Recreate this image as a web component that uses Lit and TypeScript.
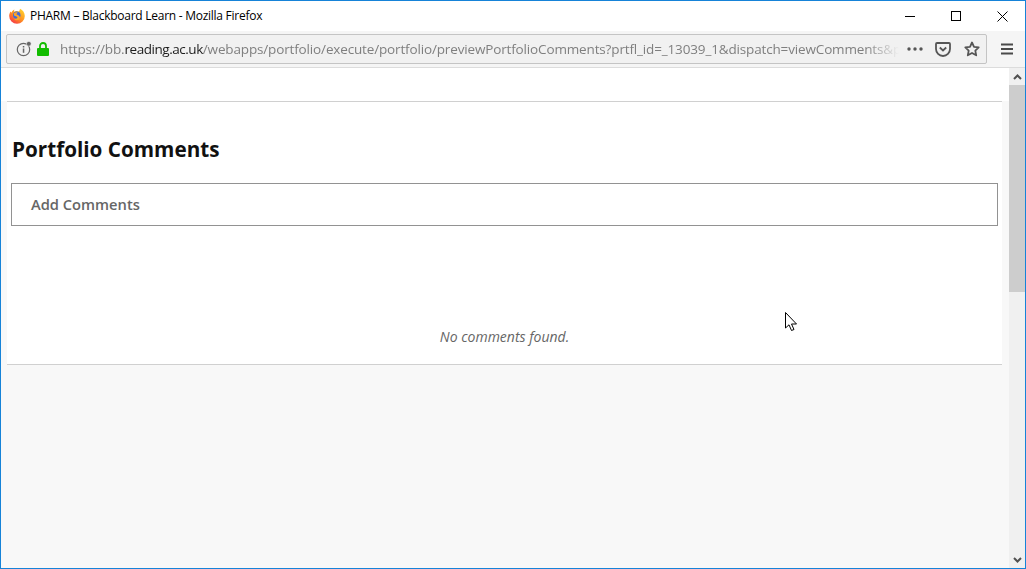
import { LitElement, html, css } from "lit";
import { customElement } from "lit/decorators.js";

@customElement("app-root")
export class AppRoot extends LitElement {
  static styles = css`
    :host { display: block; width: 1026px; height: 569px; box-sizing: border-box; border: 1px solid #1683d8; background: #fff; position: relative; overflow: hidden; font-family: "Open Sans", sans-serif; }
    .win { display: flex; flex-direction: column; height: 100%; }
    .titlebar { height: 30px; flex: none; display: flex; align-items: center; background: #fff; }
    .favicon { width: 16px; height: 16px; margin-left: 8px; flex: none; }
    .title { margin-left: 5px; font: 12px/16px "Segoe UI", "Open Sans", sans-serif; color: #000; flex: 1; letter-spacing: -0.26px; }
    .wbtn { width: 46px; height: 30px; display: flex; align-items: center; justify-content: center; flex: none; }
    .toolbar { height: 36px; flex: none; background: #f5f5f5; border-bottom: 1px solid #dcdcdc; display: flex; align-items: center; padding: 0 0 0 5px; }
    .urlbar { width: 981px; height: 30px; box-sizing: border-box; border: 1px solid #c4c4c4; border-radius: 2px; background: #f1f1f1; display: flex; align-items: center; flex: none; }
    .info { margin-left: 9px; flex: none; }
    .lock { margin-left: 5px; flex: none; }
    .url { margin-left: 11px; width: 839px; flex: none; white-space: nowrap; font: 13.5px/20px "Open Sans", sans-serif; color: #7f7f7f; letter-spacing: -0.15px;
      -webkit-mask-image: linear-gradient(to right, #000 96%, transparent 100%); mask-image: linear-gradient(to right, #000 96%, transparent 100%); }
    .url b { font-weight: 400; color: #1c1c1c; letter-spacing: -0.46px; }
    .dots { margin-left: 8px; flex: none; }
    .pocket { margin-left: 12px; flex: none; }
    .star { margin-left: 13px; flex: none; }
    .menu { margin-left: 13px; flex: none; }
    .body { flex: 1; display: flex; min-height: 0; background: #f8f8f8; }
    .page { flex: 1; display: flex; flex-direction: column; min-width: 0; }
    .band { height: 33px; flex: none; background: #fff; }
    .main { flex: none; height: 264px; box-sizing: border-box; margin: 0 7px 0 6px; background: #fff; border-top: 1px solid #d0d0d0; border-bottom: 1px solid #d0d0d0; display: flex; flex-direction: column; }
    h1 { margin: 32px 0 0 5px; font: 700 20.7px/30px "Open Sans", sans-serif; color: #111; }
    .add { margin: 19px 4px 0 4px; height: 43px; box-sizing: border-box; border: 1px solid #929292; display: flex; align-items: center; padding: 0 0 2px 19px; font: 600 14.7px/20px "Open Sans", sans-serif; color: #666; flex: none; }
    .empty { margin-top: 101px; text-align: center; font: italic 400 14px/20px "Open Sans", sans-serif; color: #666; }
    .sb { width: 16px; flex: none; background: #f0f0f0; display: flex; flex-direction: column; }
    .sb-btn { height: 17px; display: flex; align-items: center; justify-content: center; flex: none; }
    .thumb { height: 207px; background: #cdcdcd; flex: none; }
    .sb-track { flex: 1; }
    .cursor { position: absolute; left: 784px; top: 311px; }
  `;

  render() {
    return html`<div class="win">
      <div class="titlebar">
        <svg class="favicon" viewBox="0 0 16 16">
          <defs>
            <linearGradient id="fx" x1="0.85" y1="0.05" x2="0.15" y2="0.95">
              <stop offset="0" stop-color="#ffd02e"/>
              <stop offset="0.5" stop-color="#ff9320"/>
              <stop offset="1" stop-color="#f5324a"/>
            </linearGradient>
          </defs>
          <path d="M11 .8c2.800 1.200 4.800 4 4.800 7.200A7.800 7.800 0 0 1 .2 8C.2 6.300.7 4.700 1.600 3.400l.9 1.400C3 3.200 4.200 2 5.400 1.600 5 2.500 5 3.300 5.300 3.800 6.800 2.700 8.500 2.900 9.800 3.600 10.500 2.700 10.900 1.800 11 .8z" fill="url(#fx)"/>
          <circle cx="7.800" cy="7.200" r="3.700" fill="#3f6ad8"/>
          <path d="M5 5.300c1-.9 2.400-1.200 3.700-.8L7.400 6.200 9.200 7.200c1.200.7 2 1.700 1.700 3-.3 1.200-1.500 2-3 2-1.300 0-2.500-.7-3.100-1.800 1.300.6 3 .4 3.500-.6.300-.6-.2-1.200-.9-1.400L5 7.600z" fill="#ffa526"/>
        </svg>
        <div class="title">PHARM – Blackboard Learn - Mozilla Firefox</div>
        <div class="wbtn"><svg width="11" height="11" viewBox="0 0 11 11"><path d="M0 5.500H10" stroke="#000" stroke-width="1" fill="none"/></svg></div>
        <div class="wbtn"><svg width="11" height="11" viewBox="0 0 11 11"><rect x="0.500" y="0.500" width="9" height="9" stroke="#000" fill="none"/></svg></div>
        <div class="wbtn"><svg width="11" height="11" viewBox="0 0 11 11"><path d="M.5.500L10.500 10.500M10.500.500L.5 10.500" stroke="#000" stroke-width="1" fill="none"/></svg></div>
      </div>
      <div class="toolbar">
        <div class="urlbar">
          <svg class="info" width="16" height="16" viewBox="0 0 16 16">
            <circle cx="7.500" cy="8.500" r="6.200" fill="none" stroke="#666" stroke-width="1.200"/>
            <rect x="6.800" y="7.500" width="1.500" height="4.300" fill="#666"/><rect x="6.800" y="5" width="1.500" height="1.500" fill="#666"/>
            <circle cx="12.800" cy="2.800" r="2.400" fill="#666" stroke="#f1f1f1" stroke-width=".6"/>
          </svg>
          <svg class="lock" width="12" height="14" viewBox="0 0 12 14">
            <path d="M1 6h10a1 1 0 0 1 1 1v6a1 1 0 0 1-1 1H1a1 1 0 0 1-1-1V7a1 1 0 0 1 1-1z" fill="#12bc00"/>
            <path d="M3 6.500V4a3 3 0 0 1 6 0v2.500" fill="none" stroke="#12bc00" stroke-width="1.800"/>
          </svg>
          <div class="url">https://bb.<b>reading.ac.uk</b>/webapps/portfolio/execute/portfolio/previewPortfolioComments?prtfl_id=_13039_1&amp;dispatch=viewComments&amp;p</div>
          <svg class="dots" width="16" height="4" viewBox="0 0 16 4"><circle cx="2" cy="2" r="1.700" fill="#555"/><circle cx="8" cy="2" r="1.700" fill="#555"/><circle cx="14" cy="2" r="1.700" fill="#555"/></svg>
          <svg class="pocket" width="16" height="15" viewBox="0 0 16 15"><path d="M2 1h12a1 1 0 0 1 1 1v5a7 7 0 0 1-14 0V2a1 1 0 0 1 1-1z" fill="none" stroke="#555" stroke-width="1.800"/><path d="M4.800 5.500L8 8.500l3.200-3" fill="none" stroke="#555" stroke-width="1.800"/></svg>
          <svg class="star" width="16" height="16" viewBox="0 0 16 16"><path d="M8 1.500l2 4.300 4.700.6-3.400 3.200.9 4.700L8 12l-4.200 2.300.9-4.700L1.300 6.400 6 5.800z" fill="none" stroke="#555" stroke-width="1.800" stroke-linejoin="round"/></svg>
        </div>
        <svg class="menu" width="14" height="12" viewBox="0 0 14 12"><path d="M1 1.500H13M1 6H13M1 10.500H13" stroke="#4a4a4a" stroke-width="2"/></svg>
      </div>
      <div class="body">
        <div class="page">
          <div class="band"></div>
          <div class="main">
            <h1>Portfolio Comments</h1>
            <div class="add">Add Comments</div>
            <div class="empty">No comments found.</div>
          </div>
        </div>
        <div class="sb">
          <div class="sb-btn"><svg width="9" height="6" viewBox="0 0 9 6"><path d="M1 5L4.500 1.500 8 5" fill="none" stroke="#505050" stroke-width="2"/></svg></div>
          <div class="thumb"></div>
          <div class="sb-track"></div>
          <div class="sb-btn"><svg width="9" height="6" viewBox="0 0 9 6"><path d="M1 1L4.500 4.500 8 1" fill="none" stroke="#505050" stroke-width="2"/></svg></div>
        </div>
      </div>
    </div>
    <svg class="cursor" width="13" height="20" viewBox="0 0 13 20"><path d="M.5.500V16l3.500-3.200L6.500 18.500l2.500-1-2.500-5.500H11.500z" fill="#fff" stroke="#000" stroke-width="1"/></svg>`;
  }
}
